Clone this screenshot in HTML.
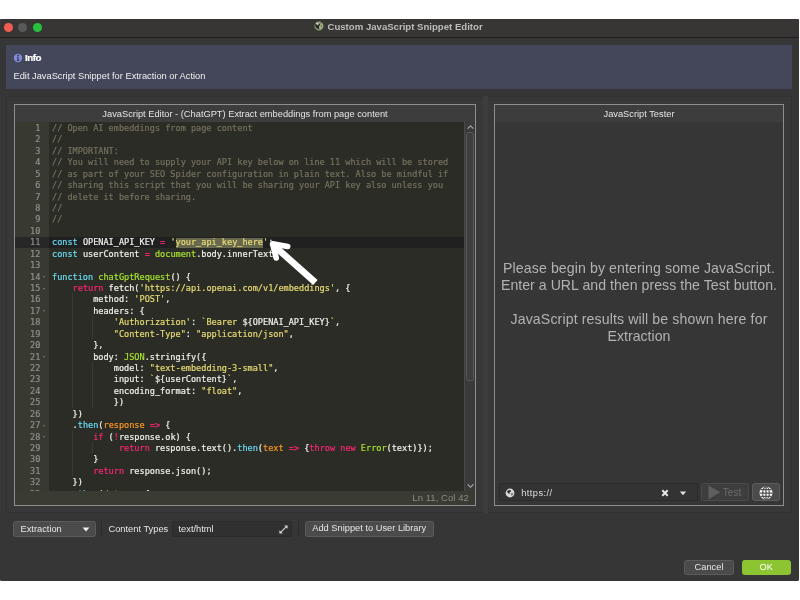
<!DOCTYPE html>
<html><head><meta charset="utf-8"><title>Custom JavaScript Snippet Editor</title>
<style>
html,body{margin:0;padding:0;background:#fff;width:800px;height:600px;overflow:hidden}
body{font-family:"Liberation Sans",Arial,sans-serif;font-size:9.29px;color:#e6e6e6;position:relative}
.abs{position:absolute}
#win{will-change:transform;position:absolute;left:0;top:19px;width:799px;height:561.6px;background:#363636;border-radius:1.5px;overflow:hidden}
#tbar{position:absolute;left:0;top:0;width:800px;height:18px;background:#383635}
#tline{position:absolute;left:0;top:18px;width:800px;height:1px;background:#1e1e1e}
.tl{position:absolute;top:3.5px;width:9px;height:9px;border-radius:50%}
#title{position:absolute;top:1.9px;left:327.5px;font-weight:bold;font-size:9.6px;color:#bcbcbc;white-space:nowrap;line-height:11px}
#info{position:absolute;left:6px;top:26px;width:786px;height:44px;background:#44475a}
.t{position:absolute;white-space:nowrap;line-height:12px}
#lp{position:absolute;left:6px;top:76.5px;width:477px;height:417.5px;background:#383838;box-sizing:border-box;border:1px solid #313131;border-right-color:#383838}
#sp{position:absolute;left:483px;top:76.5px;width:5px;height:417.5px;background:#3d3d3d}
#rp{position:absolute;left:488px;top:76.5px;width:303.5px;height:417.5px;background:#383838;box-sizing:border-box;border:1px solid #313131;border-left-color:#383838}
.frame{position:absolute;border:1px solid #8e8e8e;box-sizing:border-box}
.ftitle{position:absolute;left:0;top:0;right:0;height:17.5px;background:#3d3d3d;text-align:center;line-height:18px;color:#e4e4e4}
#code{-webkit-text-stroke:0.2px;position:absolute;left:0;top:17.5px;width:449px;height:369px;background:#2b2c25;overflow:hidden;font-family:"DejaVu Sans Mono","Liberation Mono",monospace;font-size:8.56px;line-height:11.43px;color:#f0f0ea}
#gutter{position:absolute;left:0;top:0;width:34px;height:369px;background:#383930}
.ln,.cl{margin-top:0.95px}
.ln{position:absolute;left:0;width:25.3px;text-align:right;color:#8f908a;height:11.43px}
.cl{position:absolute;left:37px;white-space:pre;height:11.43px}
.fm{position:absolute;left:27.6px;width:0;height:0;margin-top:0.6px;border-left:1.8px solid transparent;border-right:1.8px solid transparent;border-top:2.3px solid #7c7d75}
.ig{position:absolute;margin-left:-0.7px;width:1px;background:rgba(255,255,255,0.07)}
.c{color:#75715e}.k{color:#66d9ef}.r{color:#f92672}.s{color:#e6db74}.g{color:#a6e22e}.o{color:#fd971f}
#status{position:absolute;left:0;top:386.5px;width:460px;height:14px;background:#3a3b33}
.btn{position:absolute;box-sizing:border-box;border:1px solid #5c5c5c;background:#4b4b4b;border-radius:2.5px;text-align:center;color:#e6e6e6}
</style></head><body>
<div style="position:absolute;left:0;top:18.7px;width:799px;height:2px;background:#2e2c2b;border-radius:1.5px 1.5px 0 0"></div>
<div id="win">
  <div id="tbar">
    <div class="tl" style="left:4px;background:#f35c54"></div>
    <div class="tl" style="left:18px;background:#595959"></div>
    <div class="tl" style="left:32.5px;background:#28c13f"></div>
    <svg class="abs" style="left:314px;top:2.2px" width="10" height="10" viewBox="0 0 10 10"><circle cx="5" cy="5" r="4.3" fill="#a4a89c" stroke="#6f8438" stroke-width="0.7"/><path d="M1.2 3 L2.6 3.6 L3.6 4.8 L6.6 1.4 L6 3.8 L4.6 6 L5.6 8.4 L3.2 7.6 L1.4 5.4 Z" fill="#1c1c1c"/><circle cx="7.2" cy="5" r="1.5" fill="#9dbb6a"/><circle cx="7.3" cy="5" r="0.7" fill="#555"/><circle cx="3" cy="2.4" r="0.8" fill="#d8d8d8"/></svg>
    <div id="title">Custom JavaScript Snippet Editor</div>
  </div>
  <div id="tline"></div>
  <div id="info">
    <svg class="abs" style="left:6.5px;top:7.7px" width="10" height="10" viewBox="0 0 10 10"><circle cx="5" cy="5" r="4.2" fill="#828ad8"/><path d="M4.1 4.2 H5.6 V7.3 H6.2 V8 H3.9 V7.3 H4.5 V4.9 H4.1 Z" fill="#272a48"/><circle cx="5" cy="2.6" r="0.85" fill="#272a48"/></svg>
    <div class="t" style="left:19px;top:6.9px;font-weight:bold;color:#fff;font-size:9.8px;letter-spacing:-0.45px;-webkit-text-stroke:0.2px">Info</div>
    <div class="t" style="left:7.5px;top:24.5px;color:#f0f0f0">Edit JavaScript Snippet for Extraction or Action</div>
  </div>
  <div id="lp"></div><div id="sp"></div><div id="rp"></div>

  <!-- editor frame -->
  <div class="frame" style="left:14px;top:84.5px;width:462px;height:402.5px">
    <div class="ftitle">JavaScript Editor - (ChatGPT) Extract embeddings from page content</div>
    <div id="code">
      <div id="gutter"></div>
      <div class="abs" style="left:0;top:115px;width:450px;height:10.8px;background:#202020"></div>
      <div class="abs" style="left:0;top:115px;width:34px;height:10.8px;background:#272727"></div>
      <div class="abs" style="left:160.5px;top:115.8px;width:87.4px;height:10px;background:#68684e"></div>
<div class="fm" style="top:153.49px"></div>
<div class="fm" style="top:164.92px"></div>
<div class="fm" style="top:187.78px"></div>
<div class="fm" style="top:233.50px"></div>
<div class="fm" style="top:302.08px"></div>
<div class="fm" style="top:313.51px"></div>
<div class="fm" style="top:370.66px"></div>
<div class="ig" style="left:57.57px;top:171.45px;height:114.30px"></div>
<div class="ig" style="left:57.57px;top:308.61px;height:45.72px"></div>
<div class="ig" style="left:78.14px;top:194.31px;height:22.86px"></div>
<div class="ig" style="left:78.14px;top:240.03px;height:45.72px"></div>
<div class="ig" style="left:78.14px;top:320.04px;height:11.43px"></div>
<div class="ln" style="top:0px">1</div><div class="cl c" style="top:0px">// Open AI embeddings from page content</div>
<div class="ln" style="top:11.43px">2</div><div class="cl c" style="top:11.43px">//</div>
<div class="ln" style="top:22.86px">3</div><div class="cl c" style="top:22.86px">// IMPORTANT:</div>
<div class="ln" style="top:34.29px">4</div><div class="cl c" style="top:34.29px">// You will need to supply your API key below on line 11 which will be stored</div>
<div class="ln" style="top:45.72px">5</div><div class="cl c" style="top:45.72px">// as part of your SEO Spider configuration in plain text. Also be mindful if</div>
<div class="ln" style="top:57.15px">6</div><div class="cl c" style="top:57.15px">// sharing this script that you will be sharing your API key also unless you</div>
<div class="ln" style="top:68.58px">7</div><div class="cl c" style="top:68.58px">// delete it before sharing.</div>
<div class="ln" style="top:80.01px">8</div><div class="cl c" style="top:80.01px">//</div>
<div class="ln" style="top:91.44px">9</div><div class="cl c" style="top:91.44px">//</div>
<div class="ln" style="top:102.87px">10</div>
<div class="ln" style="top:114.3px">11</div><div class="cl" style="top:114.3px"><span class="k">const</span> OPENAI_API_KEY <span class="r">=</span> <span class="s">'your_api_key_here'</span>;</div>
<div class="ln" style="top:125.73px">12</div><div class="cl" style="top:125.73px"><span class="k">const</span> userContent <span class="r">=</span> <span class="g">document</span>.body.innerText;</div>
<div class="ln" style="top:137.16px">13</div>
<div class="ln" style="top:148.59px">14</div><div class="cl" style="top:148.59px"><span class="k">function</span> <span class="g">chatGptRequest</span>() {</div>
<div class="ln" style="top:160.02px">15</div><div class="cl" style="top:160.02px">    <span class="r">return</span> fetch(<span class="s">'https://api.openai.com/v1/embeddings'</span>, {</div>
<div class="ln" style="top:171.45px">16</div><div class="cl" style="top:171.45px">        method: <span class="s">'POST'</span>,</div>
<div class="ln" style="top:182.88px">17</div><div class="cl" style="top:182.88px">        headers: {</div>
<div class="ln" style="top:194.31px">18</div><div class="cl" style="top:194.31px">            <span class="s">'Authorization'</span>: <span class="s">`Bearer </span>${OPENAI_API_KEY}<span class="s">`</span>,</div>
<div class="ln" style="top:205.74px">19</div><div class="cl" style="top:205.74px">            <span class="s">"Content-Type"</span>: <span class="s">"application/json"</span>,</div>
<div class="ln" style="top:217.17px">20</div><div class="cl" style="top:217.17px">        },</div>
<div class="ln" style="top:228.6px">21</div><div class="cl" style="top:228.6px">        body: <span class="g">JSON</span>.stringify({</div>
<div class="ln" style="top:240.03px">22</div><div class="cl" style="top:240.03px">            model: <span class="s">"text-embedding-3-small"</span>,</div>
<div class="ln" style="top:251.46px">23</div><div class="cl" style="top:251.46px">            input: <span class="s">`</span>${userContent}<span class="s">`</span>,</div>
<div class="ln" style="top:262.89px">24</div><div class="cl" style="top:262.89px">            encoding_format: <span class="s">"float"</span>,</div>
<div class="ln" style="top:274.32px">25</div><div class="cl" style="top:274.32px">            })</div>
<div class="ln" style="top:285.75px">26</div><div class="cl" style="top:285.75px">    })</div>
<div class="ln" style="top:297.18px">27</div><div class="cl" style="top:297.18px">    .<span class="k">then</span>(<span class="o">response</span> <span class="r">=&gt;</span> {</div>
<div class="ln" style="top:308.61px">28</div><div class="cl" style="top:308.61px">        <span class="r">if</span> (<span class="r">!</span>response.ok) {</div>
<div class="ln" style="top:320.04px">29</div><div class="cl" style="top:320.04px">             <span class="r">return</span> response.text().<span class="k">then</span>(<span class="o">text</span> <span class="r">=&gt;</span> {<span class="r">throw</span> <span class="r">new</span> <span class="g">Error</span>(text)});</div>
<div class="ln" style="top:331.47px">30</div><div class="cl" style="top:331.47px">        }</div>
<div class="ln" style="top:342.9px">31</div><div class="cl" style="top:342.9px">        <span class="r">return</span> response.json();</div>
<div class="ln" style="top:354.33px">32</div><div class="cl" style="top:354.33px">    })</div>
<div class="ln" style="top:365.76px">33</div><div class="cl" style="top:365.76px">    .<span class="k">then</span>(<span class="o">data</span> <span class="r">=&gt;</span> {</div>
    </div>
    <!-- scrollbar -->
    <div class="abs" style="left:449px;top:17.5px;width:11px;height:369px;background:#3a3a3a;box-sizing:border-box;border-left:1px solid #4a4b44"></div>
    <svg class="abs" style="left:451px;top:19.5px" width="9" height="6" viewBox="0 0 9 6"><path d="M1.7 4.7 L4.5 1.7 L7.3 4.7" fill="none" stroke="#b0b0b0" stroke-width="1.1"/></svg>
    <div class="abs" style="left:451.2px;top:27.2px;width:7.6px;height:249.5px;box-sizing:border-box;border:1px solid #585858;border-radius:2.5px;background:#3f3f3f"></div>
    <svg class="abs" style="left:451px;top:378.8px" width="9" height="6" viewBox="0 0 9 6"><path d="M1.7 1.3 L4.5 4.3 L7.3 1.3" fill="none" stroke="#b0b0b0" stroke-width="1.1"/></svg>
    <div id="status"><div class="t" style="right:6.2px;top:1px;color:#8a8b82;font-size:9.5px;letter-spacing:0.05px">Ln 11, Col 42</div></div>
    <!-- arrow -->
    <svg class="abs" style="left:240px;top:125px" width="80" height="60" viewBox="255 228 80 60"><path d="M315.4 280.5 L274 243.8" stroke="#fff" stroke-width="6.6" fill="none"/><path d="M287.7 244.5 L272.6 241.8 L276.2 256" stroke="#fff" stroke-width="5.6" fill="none" stroke-linecap="round" stroke-linejoin="round"/></svg>
  </div>

  <!-- tester frame -->
  <div class="frame" style="left:494px;top:84.5px;width:290px;height:402.5px;background:#363636">
    <div class="ftitle">JavaScript Tester</div>
    <div class="abs" style="left:0;right:0;top:155.3px;text-align:center;font-size:14.14px;line-height:17.1px;color:#b2b2b2;white-space:nowrap"><span style="letter-spacing:0.1px">Please begin by entering some JavaScript.</span><br><span style="letter-spacing:0.03px">Enter a URL and then press the Test button.</span><br><br><span style="letter-spacing:0.12px">JavaScript results will be shown here for</span><br>Extraction</div>
    <div class="abs" style="left:4px;top:378px;width:199px;height:18.6px;box-sizing:border-box;border:1px solid #2a2a2a;background:#333;border-radius:1.5px"></div>
    <svg class="abs" style="left:9.6px;top:383px" width="10" height="10" viewBox="0 0 10 10"><circle cx="5" cy="5" r="4.4" fill="#d8d8d8"/><path d="M3 2.2 L5.5 2 L6 3.6 L4.6 4.4 L4.8 5.8 L3.4 5.4 L2 3.8 Z" fill="#303030"/><path d="M6.2 5.6 L7.8 5.2 L7.6 6.8 L6.4 7.6 Z" fill="#303030"/></svg>
    <div class="t" style="left:26.3px;top:382.3px;color:#dedede;letter-spacing:0.4px">https://</div>
    <svg class="abs" style="left:166.2px;top:384.2px" width="8" height="8" viewBox="0 0 8 8"><path d="M1.3 1.3 L6.7 6.7 M6.7 1.3 L1.3 6.7" stroke="#e8e8e8" stroke-width="2"/></svg>
    <svg class="abs" style="left:184.4px;top:386px" width="8" height="5" viewBox="0 0 8 5"><path d="M0.8 0.6 L7.2 0.6 L4 4.2 Z" fill="#e0e0e0"/></svg>
    <div class="btn" style="left:205.8px;top:378px;width:48.7px;height:18.6px;background:#3e3e3e;border-color:#4a4a4a"></div>
    <svg class="abs" style="left:212.9px;top:380.9px" width="13" height="15" viewBox="0 0 13 15"><path d="M0.5 0.3 L12.3 7.3 L0.5 14.3 Z" fill="#5e5e5e"/></svg>
    <div class="t" style="left:227.7px;top:382.1px;color:#6c6c6c;font-size:10px;letter-spacing:0.1px">Test</div>
    <div class="btn" style="left:256.5px;top:378px;width:28px;height:18.6px"></div>
    <svg class="abs" style="left:263.6px;top:381.2px" width="14" height="14" viewBox="0 0 14 14"><circle cx="7" cy="7" r="6.5" fill="#fff"/><path d="M7 0.5 V13.5 M0.5 7 H13.5 M1.8 3.7 H12.2 M1.8 10.3 H12.2" stroke="#505050" stroke-width="1.25" fill="none"/><ellipse cx="7" cy="7" rx="3.3" ry="6.4" fill="none" stroke="#505050" stroke-width="1.2"/></svg>
  </div>

  <!-- bottom toolbar -->
  <div class="btn" style="left:13px;top:502px;width:83px;height:15.5px"></div>
  <div class="t" style="left:20.5px;top:504px">Extraction</div>
  <svg class="abs" style="left:82px;top:508px" width="8" height="5" viewBox="0 0 8 5"><path d="M0.6 0.5 L7.4 0.5 L4 4.4 Z" fill="#f0f0f0"/></svg>
  <div class="abs" style="left:100.5px;top:502px;width:1px;height:16px;background:#2a2a2a"></div>
  <div class="t" style="left:108.5px;top:504px">Content Types</div>
  <div class="abs" style="left:172px;top:502px;width:119.5px;height:15.5px;box-sizing:border-box;border:1px solid #2b2b2b;background:#303030;border-radius:2px"></div>
  <div class="t" style="left:178.5px;top:504px">text/html</div>
  <svg class="abs" style="left:278.8px;top:505.8px" width="9" height="9" viewBox="0 0 9 9"><path d="M5.2 0.4 H8.6 V3.8 Z M0.4 5.2 V8.6 H3.8 Z" fill="#d4d4d4"/><path d="M7.4 1.6 L1.6 7.4" stroke="#d4d4d4" stroke-width="1.1"/></svg>
  <div class="abs" style="left:298px;top:502px;width:1px;height:16px;background:#2a2a2a"></div>
  <div class="btn" style="left:305px;top:502px;width:128.5px;height:15.5px;line-height:13.5px">Add Snippet to User Library</div>

  <div class="btn" style="left:684px;top:541px;width:50px;height:15px;line-height:13px">Cancel</div>
  <div class="btn" style="left:741.5px;top:541px;width:49.6px;height:15px;line-height:13px;background:#8cc432;border-color:#8cc432;color:#fff">OK</div>
</div>
</body></html>
